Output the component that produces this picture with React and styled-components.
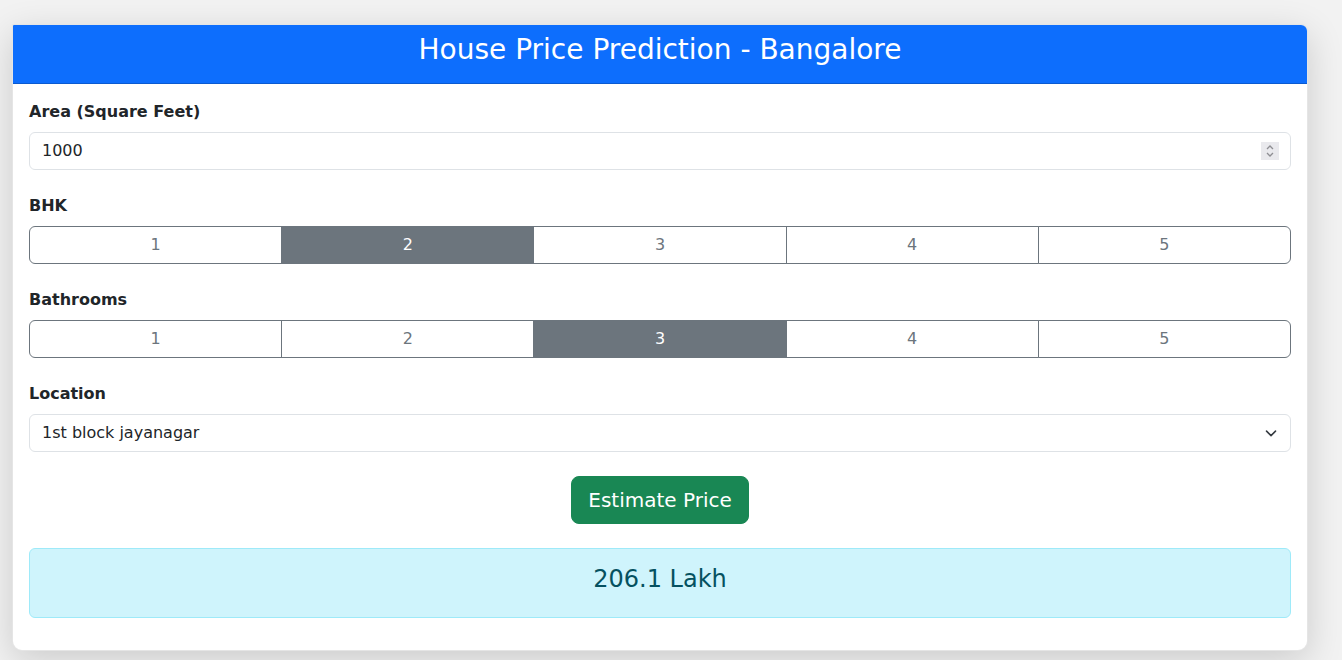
import React, { useState } from "react";
import styled, { createGlobalStyle } from "styled-components";

const GlobalStyle = createGlobalStyle`
  html, body { margin: 0; padding: 0; }
  body {
    background: #f2f2f2;
    font-family: "DejaVu Sans", "Noto Sans", sans-serif;
    font-size: 16px;
    line-height: 1.5;
    color: #212529;
  }
  * { box-sizing: border-box; }
`;

const Page = styled.div`
  padding: 24px 34px 40px 12px;
`;

const Card = styled.div`
  background: #fff;
  border: 1px solid rgba(0, 0, 0, 0.1);
  border-radius: 2px 7px 10px 10px;
  box-shadow: 0 10px 36px rgba(0, 0, 0, 0.16);
  overflow: hidden;
`;

const Header = styled.div`
  background: #0d6efd;
  color: #fff;
  padding: 8px 16px;
  border-bottom: 1px solid rgba(0, 0, 0, 0.175);
  text-align: center;
`;

const Title = styled.h3`
  margin: 0 0 8px;
  font-size: 28px;
  font-weight: 400;
  line-height: 1.2;
`;

const Body = styled.div`
  padding: 16px;
`;

const Group = styled.div`
  margin-bottom: 24px;
`;

const Label = styled.label`
  display: block;
  font-weight: 700;
  margin-bottom: 8px;
`;

const FieldWrap = styled.div`
  position: relative;
`;

const Input = styled.input`
  display: block;
  width: 100%;
  height: 38px;
  padding: 6px 12px;
  font: inherit;
  color: #212529;
  background: #fff;
  border: 1px solid #dee2e6;
  border-radius: 6px;
  outline: none;
  -moz-appearance: textfield;
  &::-webkit-inner-spin-button,
  &::-webkit-outer-spin-button {
    -webkit-appearance: none;
    margin: 0;
  }
`;

const Spinner = styled.span`
  position: absolute;
  right: 12px;
  top: 10px;
  width: 18px;
  height: 18px;
  background: #e9e9ed;
  display: flex;
  align-items: center;
  justify-content: center;
  pointer-events: none;
`;

const Select = styled.select`
  display: block;
  width: 100%;
  height: 38px;
  padding: 6px 36px 6px 12px;
  font: inherit;
  color: #212529;
  background: #fff;
  border: 1px solid #dee2e6;
  border-radius: 6px;
  appearance: none;
  -webkit-appearance: none;
  outline: none;
`;

const Chevron = styled.svg`
  position: absolute;
  right: 12px;
  top: 13px;
  pointer-events: none;
`;

const BtnGroup = styled.div`
  display: flex;
  width: 100%;
`;

const ToggleBtn = styled.button`
  flex: 1 1 0;
  height: 38px;
  padding: 6px 12px;
  font: inherit;
  color: ${(p) => (p.$active ? "#fff" : "#6c757d")};
  background: ${(p) => (p.$active ? "#6c757d" : "#fff")};
  border: 1px solid #6c757d;
  border-radius: 0;
  margin-left: -1px;
  cursor: pointer;
  &:first-child {
    margin-left: 0;
    border-radius: 6px 0 0 6px;
  }
  &:last-child {
    border-radius: 0 6px 6px 0;
  }
`;

const Center = styled.div`
  display: flex;
  justify-content: center;
  margin-bottom: 24px;
`;

const PrimaryBtn = styled.button`
  height: 48px;
  padding: 8px 16px;
  font: inherit;
  font-size: 20px;
  line-height: 1.5;
  color: #fff;
  background: #198754;
  border: 1px solid #198754;
  border-radius: 8px;
  cursor: pointer;
`;

const Alert = styled.div`
  background: #cff4fc;
  border: 1px solid #9eeaf9;
  color: #055160;
  border-radius: 6px;
  padding: 16px;
  text-align: center;
  margin-bottom: 16px;
`;

const Result = styled.h4`
  margin: 0 0 8px;
  font-size: 24px;
  font-weight: 400;
  line-height: 1.2;
`;

function Toggle({ value, onChange }) {
  return (
    <BtnGroup>
      {[1, 2, 3, 4, 5].map((n) => (
        <ToggleBtn key={n} $active={value === n} onClick={() => onChange(n)}>
          {n}
        </ToggleBtn>
      ))}
    </BtnGroup>
  );
}

export default function App() {
  const [area, setArea] = useState("1000");
  const [bhk, setBhk] = useState(2);
  const [bath, setBath] = useState(3);
  const [loc, setLoc] = useState("1st block jayanagar");

  return (
    <>
      <GlobalStyle />
      <Page>
        <Card>
          <Header>
            <Title>House Price Prediction - Bangalore</Title>
          </Header>
          <Body>
            <Group>
              <Label>Area (Square Feet)</Label>
              <FieldWrap>
                <Input type="number" value={area} onChange={(e) => setArea(e.target.value)} />
                <Spinner>
                  <svg width="10" height="14" viewBox="0 0 10 14" fill="none" stroke="#8e8e93" strokeWidth="1.3">
                    <path d="M2 5 L5 2 L8 5" />
                    <path d="M2 9 L5 12 L8 9" />
                  </svg>
                </Spinner>
              </FieldWrap>
            </Group>
            <Group>
              <Label>BHK</Label>
              <Toggle value={bhk} onChange={setBhk} />
            </Group>
            <Group>
              <Label>Bathrooms</Label>
              <Toggle value={bath} onChange={setBath} />
            </Group>
            <Group>
              <Label>Location</Label>
              <FieldWrap>
                <Select value={loc} onChange={(e) => setLoc(e.target.value)}>
                  <option>1st block jayanagar</option>
                  <option>1st phase jp nagar</option>
                  <option>2nd phase judicial layout</option>
                </Select>
                <Chevron width="16" height="12" viewBox="0 0 16 12" fill="none" stroke="#343a40" strokeWidth="2" strokeLinecap="round" strokeLinejoin="round">
                  <path d="M2 3.5 L8 9.5 L14 3.5" transform="scale(0.75) translate(2.7 2)" />
                </Chevron>
              </FieldWrap>
            </Group>
            <Center>
              <PrimaryBtn>Estimate Price</PrimaryBtn>
            </Center>
            <Alert>
              <Result>206.1 Lakh</Result>
            </Alert>
          </Body>
        </Card>
      </Page>
    </>
  );
}
